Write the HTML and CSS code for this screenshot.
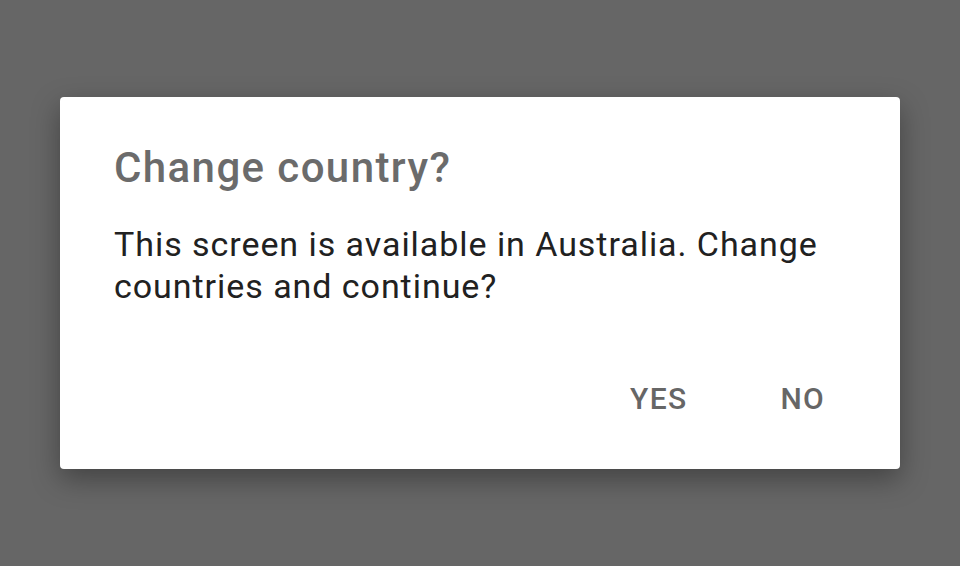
FILE: index.html
```html
<!DOCTYPE html>
<html lang="en">
<head>
  <meta charset="UTF-8">
  <title>Change country?</title>
  <link rel="stylesheet" href="styles.css">
</head>
<body>
  <div class="dialog">
    <h1 class="dialog-title">Change country?</h1>
    <p class="dialog-text">This screen is available in Australia. Change countries and continue?</p>
    <div class="dialog-actions">
      <button class="action yes">YES</button>
      <button class="action no">NO</button>
    </div>
  </div>
</body>
</html>
```
FILE: styles.css
```css
html, body {
  height: 100%;
}
body {
  margin: 0;
  padding: 97px 0 0 60px;
  box-sizing: border-box;
  background: #666666;
  font-family: Roboto, 'Noto Sans', sans-serif;
  overflow: hidden;
}
.dialog {
  width: 840px;
  height: 372px;
  box-sizing: border-box;
  padding: 46px 56px 0 54px;
  background: #fff;
  border-radius: 4px;
  box-shadow: 0 10px 28px rgba(0,0,0,0.35);
}
.dialog-title {
  margin: 0;
  font-size: 42px;
  line-height: 50px;
  font-weight: 500;
  letter-spacing: 1.4px;
  color: #6b6b6b;
}
.dialog-text {
  margin: 30px 0 0 0;
  font-size: 34px;
  line-height: 42px;
  letter-spacing: 0.95px;
  color: #212121;
}
.dialog-actions {
  margin-top: 74px;
  display: flex;
  justify-content: flex-end;
  gap: 93px;
  padding-right: 19px;
}
.action {
  padding: 0;
  border: none;
  background: none;
  font-family: inherit;
  font-size: 30px;
  line-height: 36px;
  font-weight: 500;
  letter-spacing: 1.3px;
  color: #666666;
  cursor: pointer;
}
```
